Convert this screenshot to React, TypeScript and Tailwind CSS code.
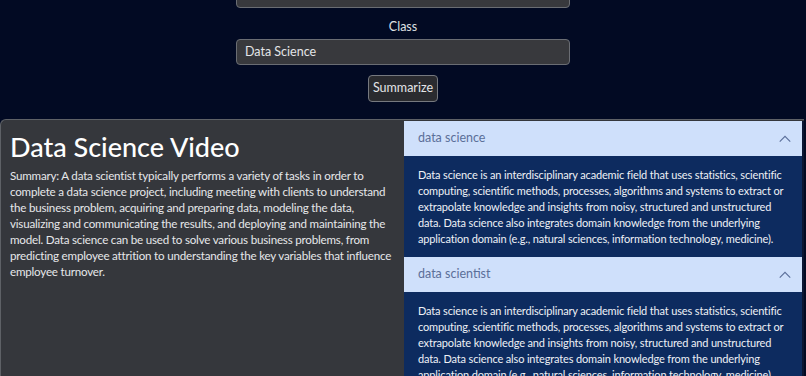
import React from "react";

const summary = [
  "Summary: A data scientist typically performs a variety of tasks in order to",
  "complete a data science project, including meeting with clients to understand",
  "the business problem, acquiring and preparing data, modeling the data,",
  "visualizing and communicating the results, and deploying and maintaining the",
  "model. Data science can be used to solve various business problems, from",
  "predicting employee attrition to understanding the key variables that influence",
  "employee turnover.",
];

const body = [
  "Data science is an interdisciplinary academic field that uses statistics, scientific",
  "computing, scientific methods, processes, algorithms and systems to extract or",
  "extrapolate knowledge and insights from noisy, structured and unstructured",
  "data. Data science also integrates domain knowledge from the underlying",
  "application domain (e.g., natural sciences, information technology, medicine).",
];

const items = [
  { title: "data science", lines: body },
  { title: "data scientist", lines: body },
];

function Chevron() {
  return (
    <svg width="14" height="14" viewBox="0 0 16 16" fill="none" className="text-[#5b6f99]">
      <path d="M2 11 L8 5 L14 11" stroke="currentColor" strokeWidth="1.3" />
    </svg>
  );
}

export default function App() {
  return (
    <div
      className="w-[806px] h-[376px] overflow-hidden bg-[#020a23] text-white flex flex-col"
      style={{ fontFamily: "Lato, 'Open Sans', sans-serif" }}
    >
      {/* Form */}
      <div className="flex flex-col items-center -mt-[18px]">
        <div className="w-[334px] h-[26px] rounded-[4px] border border-[#6a6d73] bg-[#38393d]" />
        <label className="mt-[11px] text-[12.5px] text-[#dfe0e3] leading-[16px]">Class</label>
        <div className="mt-[4px] w-[334px] h-[26px] rounded-[4px] border border-[#6a6d73] bg-[#38393d] flex items-center px-[8px] text-[12.5px] text-[#e4e5e8]">
          Data Science
        </div>
        <button className="mt-[10px] h-[27px] w-[70px] rounded-[4px] border border-[#76797f] bg-[#2a2b2f] text-[12.5px] text-[#e4e5e8]">
          Summarize
        </button>
      </div>

      {/* Result card */}
      <div className="mt-[17px] w-[804px] flex-1 flex rounded-tl-[6px] border-t border-l border-[#5e6166] bg-[#35373c] overflow-hidden">
        <div className="w-[403px] shrink-0 overflow-hidden px-[9px] pt-[8px]">
          <h1 className="text-[27px] leading-[38px] font-medium text-white">Data Science Video</h1>
          <p className="mt-[2px] text-[11.6px] tracking-[-0.2px] leading-[16px] text-[#e6e7ea]">
            {summary.map((l) => (
              <span key={l} className="block whitespace-nowrap">{l}</span>
            ))}
          </p>
        </div>
        <div className="flex-1 min-w-0 overflow-hidden mt-[1px] border-r-2 border-[#0b1633]">
          {items.map((it) => (
            <div key={it.title}>
              <div className="h-[35px] bg-[#cfe0fb] flex items-center justify-between pl-[14px] pr-[10px] text-[12.5px] text-[#5b6f99]">
                <span>{it.title}</span>
                <Chevron />
              </div>
              <div className="bg-[#0d2b5f] px-[14px] pt-[11px] pb-[10px] text-[11px] tracking-[-0.15px] leading-[16px] text-[#eef1f6]">
                {it.lines.map((l) => (
                  <span key={l} className="block whitespace-nowrap">{l}</span>
                ))}
              </div>
            </div>
          ))}
        </div>
      </div>
    </div>
  );
}
